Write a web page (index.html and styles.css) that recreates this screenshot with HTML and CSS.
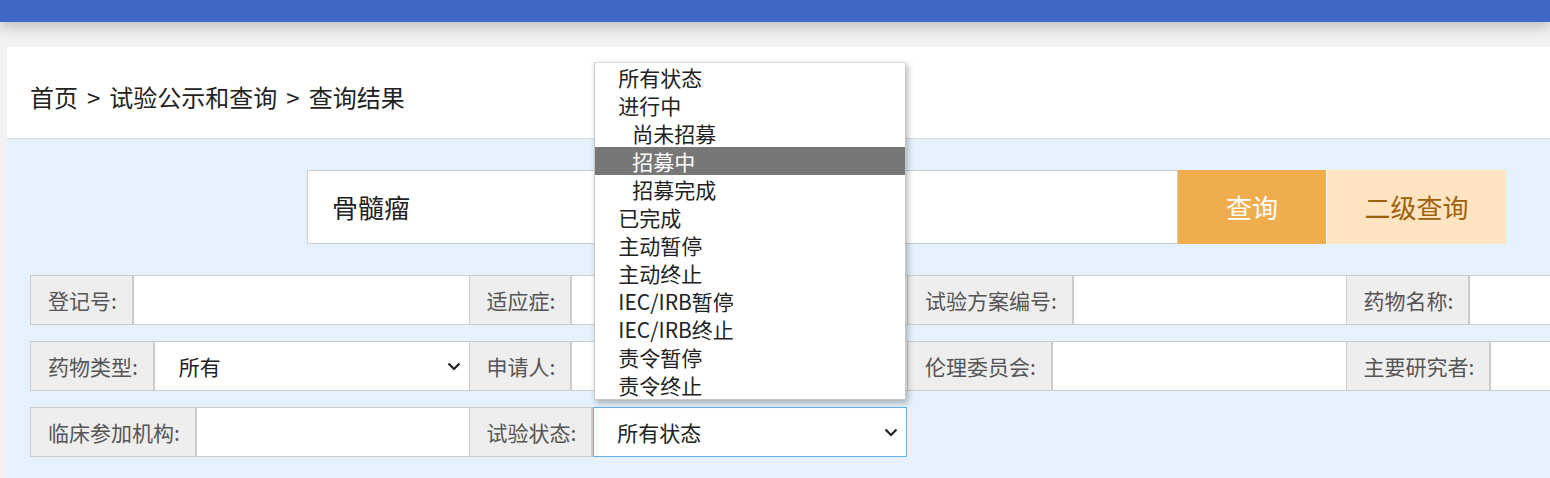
FILE: index.html
```html
<!DOCTYPE html>
<html lang="zh-CN">
<head>
<meta charset="utf-8">
<title>查询结果</title>
<link rel="stylesheet" href="styles.css">
</head>
<body>
<header class="topbar"></header>
<main class="page">
  <section class="card">
    <nav class="crumbs">首页<span class="sep">&gt;</span>试验公示和查询<span class="sep">&gt;</span>查询结果</nav>
    <div class="panel">
      <div class="search">
        <div class="search-input">骨髓瘤</div>
        <div class="btn btn-main">查询</div>
        <div class="btn btn-sub">二级查询</div>
      </div>
      <div class="rows">
        <div class="row">
          <div class="field"><div class="label">登记号:</div><div class="input"></div></div>
          <div class="field"><div class="label">适应症:</div><div class="input"></div></div>
          <div class="field"><div class="label">试验方案编号:</div><div class="input"></div></div>
          <div class="field"><div class="label">药物名称:</div><div class="input"></div></div>
        </div>
        <div class="row">
          <div class="field"><div class="label">药物类型:</div>
            <div class="input select"><span>所有</span>
              <svg class="chev" width="14" height="9" viewBox="0 0 14 9"><path d="M1.5 1.5 L7 7 L12.5 1.5" fill="none" stroke="#222" stroke-width="2.2"/></svg>
            </div>
          </div>
          <div class="field"><div class="label">申请人:</div><div class="input"></div></div>
          <div class="field"><div class="label">伦理委员会:</div><div class="input"></div></div>
          <div class="field"><div class="label">主要研究者:</div><div class="input"></div></div>
        </div>
        <div class="row">
          <div class="field"><div class="label">临床参加机构:</div><div class="input"></div></div>
          <div class="field"><div class="label">试验状态:</div>
            <div class="input select focus"><span>所有状态</span>
              <svg class="chev" width="14" height="9" viewBox="0 0 14 9"><path d="M1.5 1.5 L7 7 L12.5 1.5" fill="none" stroke="#222" stroke-width="2.2"/></svg>
              <ul class="menu">
                <li>所有状态</li>
                <li>进行中</li>
                <li class="sub">尚未招募</li>
                <li class="sub active">招募中</li>
                <li class="sub">招募完成</li>
                <li>已完成</li>
                <li>主动暂停</li>
                <li>主动终止</li>
                <li>IEC/IRB暂停</li>
                <li>IEC/IRB终止</li>
                <li>责令暂停</li>
                <li>责令终止</li>
              </ul>
            </div>
          </div>
        </div>
      </div>
    </div>
  </section>
</main>
</body>
</html>
```

FILE: styles.css
```css
* { box-sizing: border-box; }
html, body { margin: 0; padding: 0; }
body {
  width: 1550px;
  height: 478px;
  overflow: hidden;
  background: #f2f2f2;
  font-family: "Noto Sans CJK SC", "Noto Sans", sans-serif;
  color: #222;
}
.topbar {
  height: 22px;
  background: #3f69c4;
  box-shadow: 0 5px 14px rgba(0,0,0,0.22);
  position: relative;
  z-index: 2;
}
.page {
  padding: 25px 0 0 7px;
}
.card {
  background: #fff;
  width: 1543px;
  overflow: hidden;
}
.crumbs {
  height: 92px;
  padding-left: 23px;
  font-size: 24px;
  line-height: 100px;
  color: #222;
  border-bottom: 1px solid #ddd;
  white-space: nowrap;
}
.sep { margin: 0 9px; }
.panel {
  background: #e5f2fd;
  padding-top: 31px;
  height: 340px;
}
.search {
  display: flex;
  margin-left: 300px;
  height: 74px;
}
.search-input {
  width: 871px;
  background: #fff;
  border: 1px solid #ccc;
  font-size: 26px;
  line-height: 72px;
  padding-left: 24px;
  color: #222;
}
.btn {
  font-size: 26px;
  line-height: 74px;
  text-align: center;
}
.btn-main {
  width: 149px;
  background: #f0ad4e;
  color: #fff;
  border-right: 1px solid #fff;
}
.btn-sub {
  width: 179px;
  background: #fee4c0;
  color: #a0610c;
}
.rows {
  margin: 31px 0 0 23px;
  display: flex;
  flex-direction: column;
  gap: 16px;
}
.row {
  display: flex;
  height: 50px;
}
.field {
  flex: none;
  width: 438.5px;
  display: flex;
  border-top: 1px solid #ccc;
  border-bottom: 1px solid #ccc;
  background: #fff;
}
.label {
  flex: none;
  background: #eee;
  border-left: 1px solid #ccc;
  border-right: 2px solid #ccc;
  color: #555;
  font-size: 21px;
  line-height: 48px;
  padding: 0 15px 0 17px;
  white-space: nowrap;
}
.input {
  flex: 1;
  background: #fff;
  position: relative;
}
.select {
  display: flex;
  align-items: center;
  justify-content: space-between;
  font-size: 21px;
  padding: 0 8px 0 24px;
  color: #222;
}
.select.focus {
  border: 1px solid #66afe9;
  margin: -1px 0;
  padding-left: 23px;
}
.chev { flex: none; }
.menu {
  position: absolute;
  left: 0;
  bottom: calc(100% + 8px);
  width: 312px;
  margin: 0;
  padding: 0;
  list-style: none;
  background: #fff;
  border: 1px solid #c8c8c8;
  border-top-color: #ddd;
  box-shadow: 2px 3px 6px rgba(0,0,0,0.28);
  z-index: 5;
}
.menu li {
  height: 28px;
  line-height: 28px;
  font-size: 21px;
  padding-left: 23px;
  color: #222;
  white-space: nowrap;
}
.menu li.sub { padding-left: 37px; }
.menu li.active { background: #777; color: #fff; }
```
